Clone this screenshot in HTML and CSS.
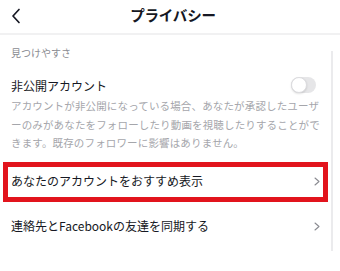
FILE: index.html
```html
<!DOCTYPE html>
<html lang="ja">
<head>
<meta charset="utf-8">
<link rel="stylesheet" href="styles.css">
</head>
<body>
<div class="screen">
  <header class="topbar">
    <span class="back">
      <svg width="10" height="16" viewBox="0 0 10 16"><path d="M8 1.5 L2 8 L8 14.5" fill="none" stroke="#161823" stroke-width="1.7" stroke-linecap="round" stroke-linejoin="round"/></svg>
    </span>
    <h1 class="title">プライバシー</h1>
    <span class="spacer"></span>
  </header>
  <main class="content">
    <div class="section-label">見つけやすさ</div>
    <div class="toggle-row">
      <span class="row-title">非公開アカウント</span>
      <span class="switch"><span class="knob"></span></span>
    </div>
    <p class="desc">アカウントが非公開になっている場合、あなたが承認したユーザ<br>ーのみがあなたをフォローしたり動画を視聴したりすることがで<br>きます。既存のフォロワーに影響はありません。</p>
    <div class="nav-row highlighted">
      <span class="row-title">あなたのアカウントをおすすめ表示</span>
      <svg class="chev" width="6" height="9" viewBox="0 0 6 9"><path d="M1 1 L5 4.5 L1 8" fill="none" stroke="#8a8b91" stroke-width="1.1" stroke-linecap="round" stroke-linejoin="round"/></svg>
    </div>
    <div class="nav-row plain">
      <span class="row-title">連絡先とFacebookの友達を同期する</span>
      <svg class="chev" width="6" height="9" viewBox="0 0 6 9"><path d="M1 1 L5 4.5 L1 8" fill="none" stroke="#8a8b91" stroke-width="1.1" stroke-linecap="round" stroke-linejoin="round"/></svg>
    </div>
    <span class="scrollbar"></span>
  </main>
</div>
</body>
</html>
```

FILE: styles.css
```css
* { box-sizing: border-box; }
html, body { margin: 0; padding: 0; background: #fff; }
body {
  font-family: "Noto Sans CJK JP", "Noto Sans", sans-serif;
  color: #161823;
}
.screen { width: 340px; height: 271px; overflow: hidden; }
.topbar {
  height: 35px;
  display: grid;
  grid-template-columns: 40px 1fr 40px;
  align-items: center;
  border-bottom: 2px solid #f1f1f2;
}
.back { display: flex; padding-left: 11px; padding-bottom: 1px; }
.title {
  margin: 0;
  text-align: center;
  font-size: 14.5px;
  font-weight: 700;
  line-height: 20px;
  padding-left: 6px;
  padding-bottom: 3px;
  letter-spacing: -0.2px;
}
.content { position: relative; padding-top: 11px; }
.section-label {
  font-size: 10px;
  line-height: 14px;
  color: #8a8b91;
  padding-left: 11px;
}
.toggle-row {
  margin-top: 18px;
  display: flex;
  align-items: center;
  justify-content: space-between;
  padding: 0 24px 0 11px;
  height: 16px;
}
.row-title { font-size: 12px; line-height: 16px; color: #161823; }
.switch {
  width: 25px;
  height: 16px;
  border-radius: 8px;
  background: #e6e6e8;
  position: relative;
  margin-top: -2px;
}
.knob {
  position: absolute;
  left: 0;
  top: 0;
  width: 16px;
  height: 16px;
  border-radius: 50%;
  background: #fff;
  border: 1px solid #dcdcdf;
  box-shadow: 0 1px 2px rgba(0,0,0,0.12);
}
.desc {
  margin: 3px 0 0;
  padding-left: 11px;
  font-size: 10.5px;
  letter-spacing: 0.15px;
  line-height: 18.5px;
  color: #a5a6ab;
  white-space: nowrap;
}
.nav-row {
  display: flex;
  align-items: center;
  justify-content: space-between;
}
.highlighted {
  margin: 9px 12px 0 3px;
  height: 40px;
  border: 5px solid #e2141d;
  padding: 0 3px 1px 3px;
}
.plain {
  height: 48px;
  padding: 0 20px 0 11px;
}
.chev { margin-top: 1px; }
.scrollbar {
  position: absolute;
  left: 331px;
  top: 16px;
  width: 2px;
  height: 200px;
  background: #ebebed;
}
```
